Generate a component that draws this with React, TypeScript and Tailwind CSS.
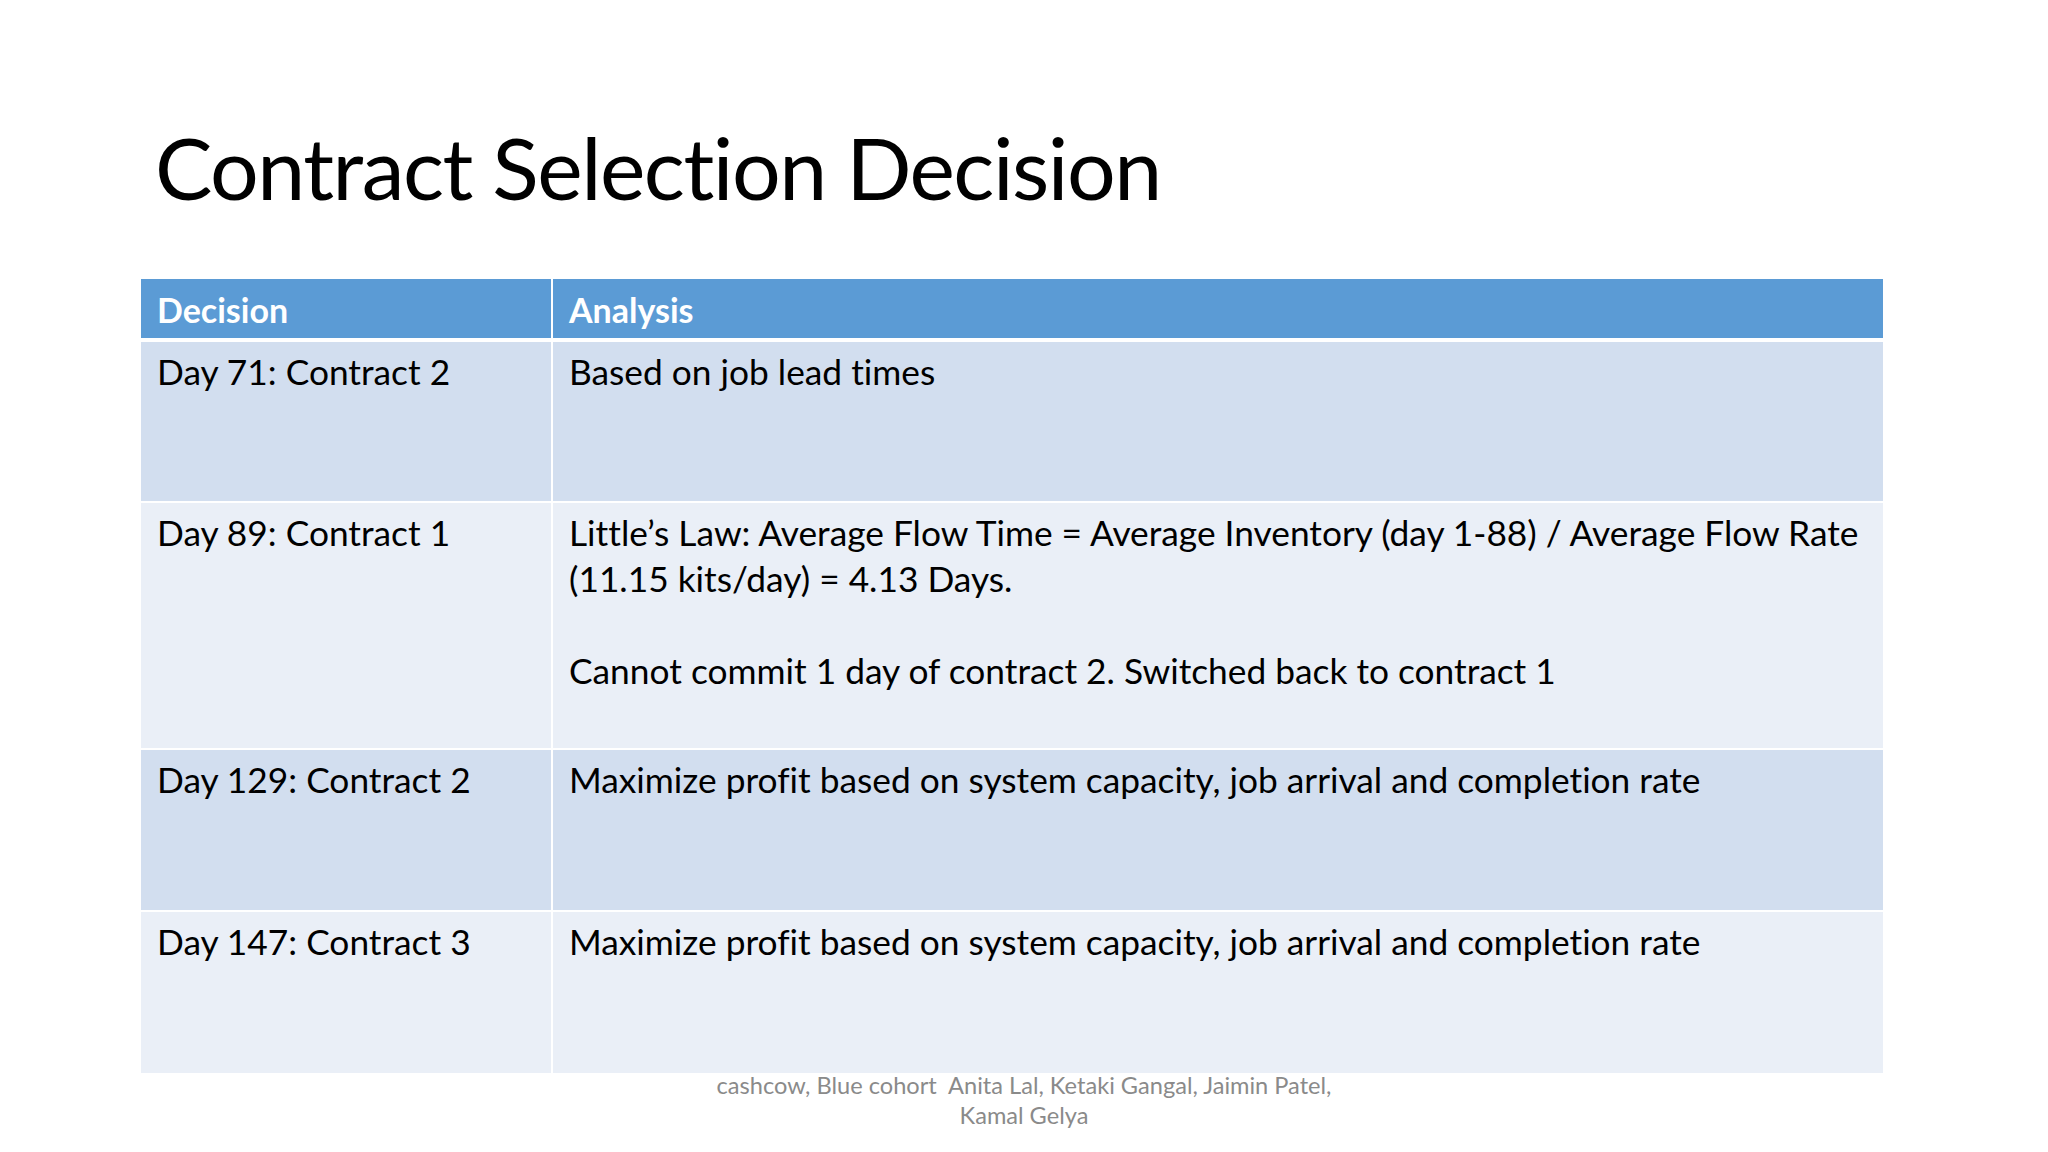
export default function App() {
  const rows = [
    { decision: "Day 71: Contract 2", analysis: ["Based on job lead times"], h: "h-[159px]", bg: "bg-[#d2deef]" },
    {
      decision: "Day 89: Contract 1",
      analysis: [
        "Little’s Law: Average Flow Time = Average Inventory (day 1-88) / Average Flow Rate (11.15 kits/day) = 4.13 Days.",
        "",
        "Cannot commit 1 day of contract 2. Switched back to contract 1",
      ],
      h: "h-[245px]",
      bg: "bg-[#eaeff7]",
    },
    {
      decision: "Day 129: Contract 2",
      analysis: ["Maximize profit based on system capacity, job arrival and completion rate"],
      h: "h-[160px]",
      bg: "bg-[#d2deef]",
    },
    {
      decision: "Day 147: Contract 3",
      analysis: ["Maximize profit based on system capacity, job arrival and completion rate"],
      h: "h-[161px]",
      bg: "bg-[#eaeff7]",
    },
  ]

  return (
    <div className="w-full h-[1152px] bg-white font-['Lato','Open_Sans',sans-serif] text-black overflow-hidden [font-variant-ligatures:none]">
      {/* Title */}
      <h1 className="pl-[155px] pt-[112px] h-[279px] text-[86px] leading-[110px] tracking-[-1.5px]">
        Contract Selection Decision
      </h1>

      {/* Table */}
      <div className="ml-[141px] w-[1742px] flex flex-col gap-[2px]">
        <div className="flex h-[59px] gap-[2px] mb-[2px] bg-white">
          <div className="w-[410px] bg-[#5b9bd5] text-white font-bold text-[34px] leading-[46px] pl-[16px] pt-[8px]">
            Decision
          </div>
          <div className="flex-1 bg-[#5b9bd5] text-white font-bold text-[34px] leading-[46px] pl-[16px] pt-[8px]">
            Analysis
          </div>
        </div>
        {rows.map((row, i) => (
          <div key={i} className={`flex gap-[2px] ${row.h}`}>
            <div className={`w-[410px] ${row.bg} text-[35.3px] leading-[46px] pl-[16px] pt-[7px]`}>{row.decision}</div>
            <div className={`flex-1 ${row.bg} text-[35.3px] leading-[46px] pl-[16px] pr-[10px] pt-[7px]`}>
              {row.analysis.map((line, j) => (
                <p key={j} className="min-h-[46px]">
                  {line}
                </p>
              ))}
            </div>
          </div>
        ))}
      </div>

      {/* Footer */}
      <div className="-mt-[3px] flex justify-center">
        <p className="w-[660px] text-center text-[#8a8a8a] text-[23.6px] leading-[30px]">
          cashcow, Blue cohort&nbsp; Anita Lal, Ketaki Gangal, Jaimin Patel, Kamal Gelya
        </p>
      </div>
    </div>
  )
}
